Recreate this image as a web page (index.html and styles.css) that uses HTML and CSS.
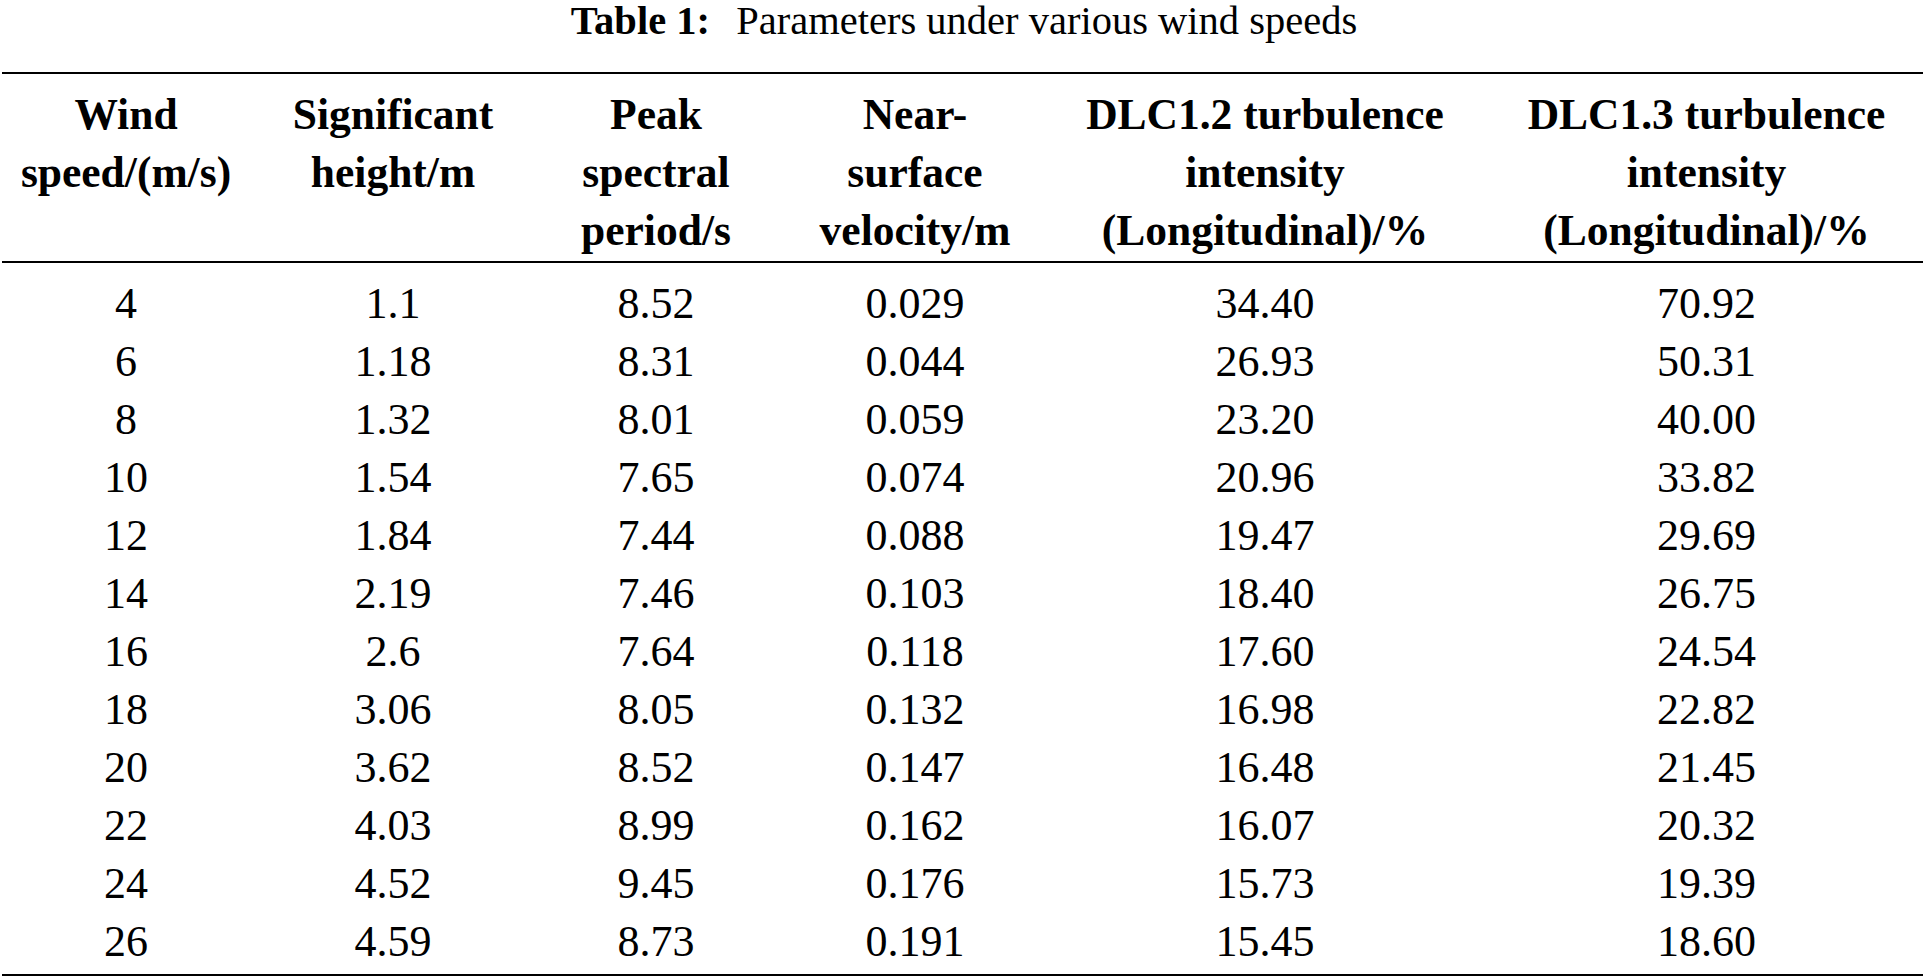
FILE: index.html
```html
<!DOCTYPE html>
<html lang="en">
<head>
<meta charset="utf-8">
<title>Table 1: Parameters under various wind speeds</title>
<link rel="stylesheet" href="styles.css">
</head>
<body>
<div class="page">
  <p class="caption"><b class="label">Table 1:</b> Parameters under various wind speeds</p>
  <table class="data">
    <colgroup>
      <col class="c1"><col class="c2"><col class="c3"><col class="c4"><col class="c5"><col class="c6">
    </colgroup>
    <thead>
      <tr>
        <th>Wind<br>speed/(m/s)</th>
        <th>Significant<br>height/m</th>
        <th>Peak<br>spectral<br>period/s</th>
        <th>Near-<br>surface<br>velocity/m</th>
        <th>DLC1.2 turbulence<br>intensity<br>(Longitudinal)/%</th>
        <th>DLC1.3 turbulence<br>intensity<br>(Longitudinal)/%</th>
      </tr>
    </thead>
    <tbody>
      <tr><td>4</td><td>1.1</td><td>8.52</td><td>0.029</td><td>34.40</td><td>70.92</td></tr>
      <tr><td>6</td><td>1.18</td><td>8.31</td><td>0.044</td><td>26.93</td><td>50.31</td></tr>
      <tr><td>8</td><td>1.32</td><td>8.01</td><td>0.059</td><td>23.20</td><td>40.00</td></tr>
      <tr><td>10</td><td>1.54</td><td>7.65</td><td>0.074</td><td>20.96</td><td>33.82</td></tr>
      <tr><td>12</td><td>1.84</td><td>7.44</td><td>0.088</td><td>19.47</td><td>29.69</td></tr>
      <tr><td>14</td><td>2.19</td><td>7.46</td><td>0.103</td><td>18.40</td><td>26.75</td></tr>
      <tr><td>16</td><td>2.6</td><td>7.64</td><td>0.118</td><td>17.60</td><td>24.54</td></tr>
      <tr><td>18</td><td>3.06</td><td>8.05</td><td>0.132</td><td>16.98</td><td>22.82</td></tr>
      <tr><td>20</td><td>3.62</td><td>8.52</td><td>0.147</td><td>16.48</td><td>21.45</td></tr>
      <tr><td>22</td><td>4.03</td><td>8.99</td><td>0.162</td><td>16.07</td><td>20.32</td></tr>
      <tr><td>24</td><td>4.52</td><td>9.45</td><td>0.176</td><td>15.73</td><td>19.39</td></tr>
      <tr><td>26</td><td>4.59</td><td>8.73</td><td>0.191</td><td>15.45</td><td>18.60</td></tr>
    </tbody>
  </table>
</div>
</body>
</html>
```

FILE: styles.css
```css
html, body {
  margin: 0;
  padding: 0;
  background: #fff;
}

body {
  font-family: "Liberation Serif", "Times New Roman", serif;
  color: #000;
}

.page {
  width: 1926px;
  padding: 0 0 0 2px;
  box-sizing: border-box;
}

.caption {
  margin: 0 0 31px 0;
  padding-top: 1px;
  text-align: center;
  font-size: 40.5px;
  line-height: 40px;
  white-space: nowrap;
}

.label {
  font-weight: bold;
  margin-right: 0.4em;
}

.data {
  width: 1921px;
  table-layout: fixed;
  border-collapse: collapse;
  border-top: 2px solid #000;
  border-bottom: 2px solid #000;
}

.c1 { width: 248px; }
.c2 { width: 286px; }
.c3 { width: 240px; }
.c4 { width: 278px; }
.c5 { width: 422px; }
.c6 { width: 447px; }

.data th,
.data td {
  padding: 0;
  text-align: center;
  white-space: nowrap;
}

.data th:nth-child(6),
.data td:nth-child(6) {
  padding-left: 14px;
}

.data th {
  font-weight: bold;
  font-size: 43.5px;
  line-height: 58px;
  vertical-align: top;
  padding-top: 11px;
  padding-bottom: 2px;
  border-bottom: 2px solid #000;
}

.data td {
  font-size: 44px;
  line-height: 58px;
  height: 58px;
}

.data tbody tr:first-child td {
  padding-top: 12px;
}

.data tbody tr:last-child td {
  padding-bottom: 3px;
}
```
